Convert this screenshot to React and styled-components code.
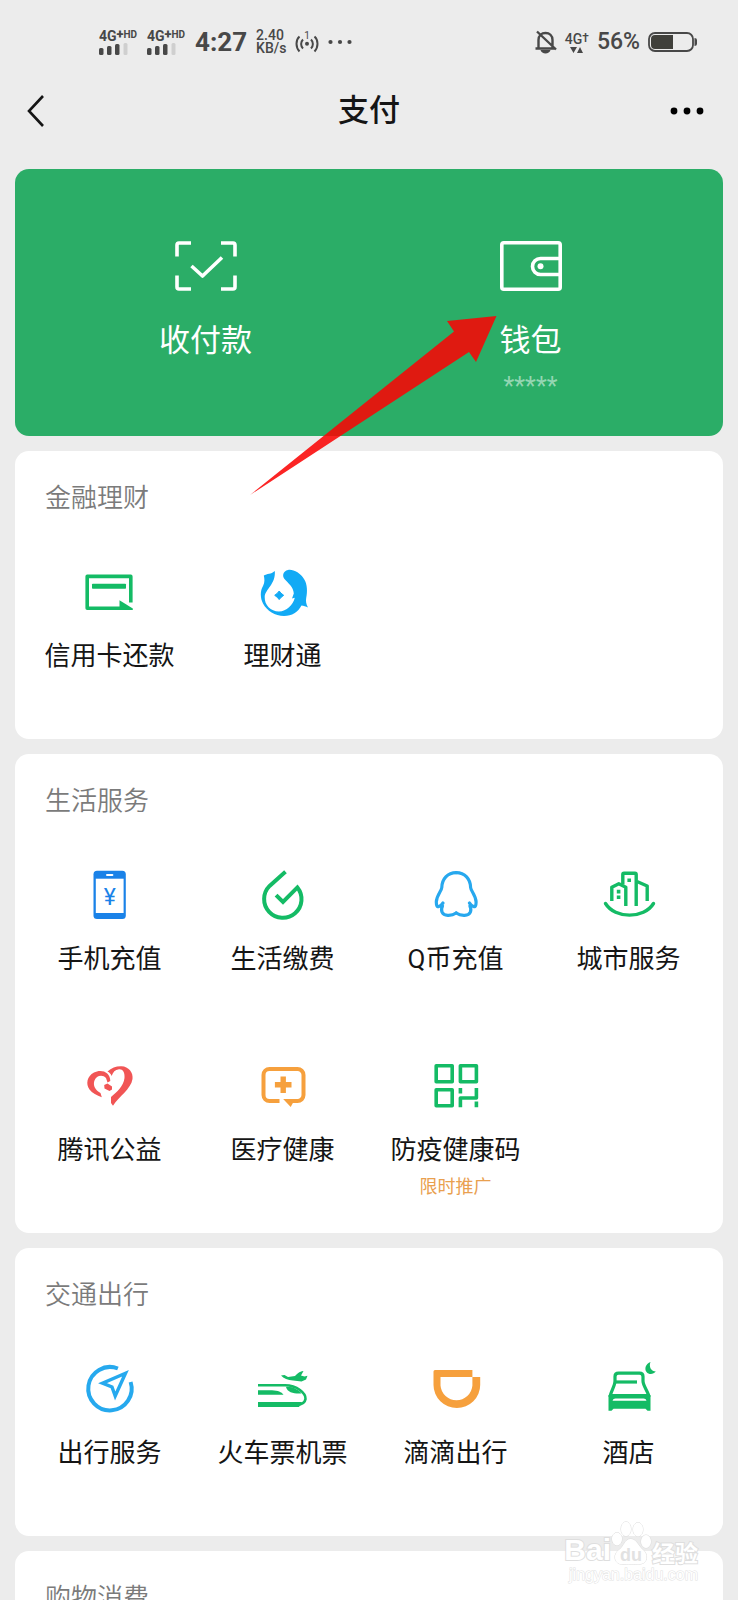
import React from "react";
import styled, { createGlobalStyle } from "styled-components";

const GREEN = "#14bb65";
const BLUE = "#12aaf5";
const ORANGE = "#f6a03d";
const RED = "#f15555";

const CardIcon = () => (
  <Icon viewBox="0 0 56 56">
    <path d="M48.8 38.5V12.4H5.2v31.9H40" fill="none" stroke={GREEN} strokeWidth="3.6" strokeLinejoin="round" />
    <rect x="10" y="19.7" width="34" height="5" rx="0.8" fill={GREEN} />
    <path d="M37.5 36.3L50.8 44.5V46H37.5z" fill={GREEN} />
  </Icon>
);

const FishIcon = () => (
  <Icon viewBox="0 0 56 56">
    <path
      d="M19.8 7C16 10.5 12 9.5 8.8 11.5C9.5 15 10 18 8 22C5 27 5.2 34 8 39.5C12 47 20 52 29 52C37 52 43 48 46.5 41.5C48.5 41.5 51 42.5 53 43.5C51 40 50.7 37 51.2 34C52.5 28 52.5 20 49 15C45.5 9 38 5 33 6C28 7 27 12 29.5 15C33 19 38.5 23 38.8 29.5L37 34.5L39.8 33.8C38 41 31.5 47.5 24 47.5C15.5 47.5 9.5 41 9.7 33C10.2 25 21 20 19.8 7z"
      fill={BLUE}
    />
    <path d="M24.2 27l1.8 2.2 2.7 2.1-2.7 2.1-1.8 2.2-1.8-2.2-2.7-2.1 2.7-2.1z" fill={BLUE} stroke={BLUE} />
  </Icon>
);

const PhoneIcon = () => (
  <Icon viewBox="0 0 56 56">
    <rect x="11.5" y="3.7" width="32.3" height="48.3" rx="3.5" fill="#1a82e8" />
    <rect x="13.8" y="11.7" width="27.8" height="34.3" fill="#fff" />
    <rect x="24" y="7" width="7.4" height="2" rx="1" fill="#fff" />
    <text x="27.8" y="38" textAnchor="middle" fontFamily="Roboto, sans-serif" fontSize="23" fill="#1a82e8">
      ¥
    </text>
  </Icon>
);

const DropIcon = () => (
  <Icon viewBox="0 0 56 56">
    <path
      d="M29 6L14.6 18.9A18.7 18.7 0 1 0 42.4 20.4L28 35L22.5 29.5"
      fill="none"
      stroke={GREEN}
      strokeWidth="4"
      strokeLinecap="square"
    />
  </Icon>
);

const PenguinIcon = () => (
  <Icon viewBox="0 0 56 56">
    <g fill="none" stroke="#27a8ee" strokeWidth="3.2" strokeLinecap="round" strokeLinejoin="round">
      <path d="M28.2 5.7C19.5 5.7 14 12 13.8 20.5C13.6 24 8.6 28 8.3 35C8.3 38.500 9.3 40.5 10.8 39.5C12.5 39 14 37.5 15 36M14.500 39C12.5 43 13.500 48 19.8 48.3C24 48.5 26 47.5 28.2 46" />
      <path d="M28.2 5.7C36.9 5.7 42.4 12 42.6 20.5C42.8 24 47.8 28 48.1 35C48.1 38.5 47.1 40.5 45.6 39.5C43.9 39 42.4 37.5 41.4 36M41.9 39C43.9 43 42.9 48 36.6 48.3C32.4 48.5 30.4 47.5 28.2 46" />
    </g>
  </Icon>
);

const CityIcon = () => (
  <Icon viewBox="0 0 56 56">
    <g fill="none" stroke={GREEN} strokeWidth="3.4" strokeLinejoin="round">
      <path d="M4.5 36.5C14 52 43 52 52.5 36.5" strokeLinecap="round" />
      <path d="M10.8 34V20.3L17.8 16.8L24.8 20.3V39" />
      <path d="M21.8 17.5V7.5Q21.8 6.3 23 6.3H34Q35.2 6.3 35.2 7.5V39" />
      <path d="M36 14.5L46.2 19V34" />
    </g>
    <path d="M15.8 22.8h3.6v3.6h-3.6zM15.8 28.4h3.6V32h-3.6zM26.4 11.4H30V15h-3.6z" fill={GREEN} />
  </Icon>
);

const HeartIcon = () => (
  <Icon viewBox="0 0 56 56">
    <path
      d="M28.3 23C28.5 13.5 18.5 10.8 12 14.6C5 18.5 3.5 26 7.5 31.5C10 35 15 37.5 19.8 39.3L18.5 35C13 32 11 27.5 12.3 23C14 17.5 20.5 16 24 20L25.5 24.500z"
      fill={RED}
    />
    <path
      d="M25.5 13.5C29.5 9.5 34.5 8 39.5 8.2C46.5 8.5 51.5 14.5 50.5 21C49 31 37 38.5 31 47.7L29 45V39C35 34 41.5 28 42.5 20C43 14 40.500 10.8 37 11.2C33 11.8 31 14 29.6 18C29 16 27.5 14.5 25.5 13.5z"
      fill={RED}
    />
    <path d="M22.2 27L25.500 25.500L30 28.500V31.500L27.500 33L22.500 30.500z" fill={RED} />
  </Icon>
);

const MedicalIcon = () => (
  <Icon viewBox="0 0 56 56">
    <path
      d="M24.5 43h-10a6 6 0 0 1-6-6V17a6 6 0 0 1 6-6h28a6 6 0 0 1 6 6v20a6 6 0 0 1-6 6H35"
      fill="none"
      stroke={ORANGE}
      strokeWidth="4"
    />
    <path d="M28.2 41H40L35.7 49z" fill={ORANGE} />
    <path d="M28.2 18.4V35M19.9 26.7h16.6" stroke={ORANGE} strokeWidth="5.4" />
  </Icon>
);

const CodeIcon = () => (
  <Icon viewBox="0 0 56 56">
    <g fill="none" stroke={GREEN} strokeWidth="3.6" strokeLinejoin="round">
      <rect x="8.2" y="7.7" width="16" height="16" />
      <rect x="32.4" y="7.7" width="16" height="16" />
      <rect x="8.2" y="31.7" width="16" height="16" />
      <path d="M32.4 49.3V40H48.4V30M32.4 30V35.5M48.4 43.5V49.3" />
    </g>
  </Icon>
);

const CompassIcon = () => (
  <Icon viewBox="0 0 56 56">
    <g fill="none" stroke="#26a9ee" strokeWidth="4">
      <path d="M35.9 7.5A21.7 21.7 0 1 0 48.6 21" />
      <path d="M43.5 12.2L20.5 22.2L30 26L33.2 35z" strokeWidth="3.4" />
    </g>
  </Icon>
);

const TrainIcon = () => (
  <Icon viewBox="0 0 56 56">
    <path d="M3 24.3H30C42 24.5 51 32 50.5 38C50 42 46 43.7 41 43.7" fill="none" stroke={GREEN} strokeWidth="2.6" />
    <path d="M3 41H47L44 46H3zM3 29.3H17C23 29.5 26.5 31 28.5 33.7H3z" fill={GREEN} />
    <path d="M31 26C37 25 44 29 46.5 32.5C40 33 32.5 32 31 26z" fill={GREEN} />
    <path
      d="M26 14.5L29.5 14L33 16L40 15C42 13 44 10.5 48.5 10L46 14.5L49.5 15.5L52.5 14.8L51 18.5L46.5 20.5L38 19.5C33 19 28.5 17.5 26 14.5z"
      fill={GREEN}
    />
  </Icon>
);

const DidiIcon = () => (
  <Icon viewBox="0 0 56 56">
    <path
      fillRule="evenodd"
      d="M7 9H44.4V16H52.2V24A23.3 23 0 0 1 5.5 24V10.5Q5.5 9 7 9zM12.5 16V24.5A16 16 0 0 0 44.4 24.5V16z"
      fill={ORANGE}
    />
  </Icon>
);

const HotelIcon = () => (
  <Icon viewBox="0 0 56 56">
    <g fill="none" stroke={GREEN} strokeWidth="3.2">
      <path d="M9 36C9.5 31 14 25 14 20V15.5Q14 12.2 17.5 12.2H38.5Q42 12.2 42 15.5V20C42 25 47.5 31 48 36" />
      <path d="M15 21H36" />
      <path d="M11 34.5H46" />
    </g>
    <path
      fillRule="evenodd"
      d="M7.5 34H49.5V49.8H46.5L44.5 47.8H12.5L10.5 49.8H7.5zM11.5 39.8H45.5Q45 37.4 42.5 37.4H14.5Q12 37.4 11.5 39.8z"
      fill={GREEN}
    />
    <path d="M49.5 1C45 2.500 43 7.500 45.500 11C48 14 52.500 13.500 54.800 10.500C50.500 10.500 47.500 6 49.500 1z" fill={GREEN} />
  </Icon>
);

const sections = [
  {
    title: "金融理财",
    items: [
      { name: "信用卡还款", icon: CardIcon },
      { name: "理财通", icon: FishIcon },
    ],
  },
  {
    title: "生活服务",
    items: [
      { name: "手机充值", icon: PhoneIcon },
      { name: "生活缴费", icon: DropIcon },
      { name: "Q币充值", icon: PenguinIcon },
      { name: "城市服务", icon: CityIcon },
      { name: "腾讯公益", icon: HeartIcon },
      { name: "医疗健康", icon: MedicalIcon },
      { name: "防疫健康码", icon: CodeIcon, note: "限时推广" },
    ],
  },
  {
    title: "交通出行",
    items: [
      { name: "出行服务", icon: CompassIcon },
      { name: "火车票机票", icon: TrainIcon },
      { name: "滴滴出行", icon: DidiIcon },
      { name: "酒店", icon: HotelIcon },
    ],
  },
  { title: "购物消费", items: [] },
];

const Signal = () => (
  <SignalBox>
    <Network>
      4G<b>+</b>
      <small>HD</small>
    </Network>
    <svg width="30" height="12" viewBox="0 0 30 12">
      <g fill="#484848">
        <rect x="0" y="5" width="4.5" height="7" rx="1.5" />
        <rect x="8" y="3" width="4.5" height="9" rx="1.5" />
        <rect x="16" y="1" width="4.5" height="11" rx="1.5" />
      </g>
      <rect x="24.5" y="0" width="4" height="12" rx="1.5" fill="#cfcfcf" />
    </svg>
  </SignalBox>
);

const Status = () => (
  <StatusBar>
    <StatusGroup>
      <Signal />
      <Signal />
      <Clock>4:27</Clock>
      <Speed>
        <span>2.40</span>
        <span>KB/s</span>
      </Speed>
      <svg width="24" height="22" viewBox="0 0 24 22">
        <g fill="none" stroke="#484848" strokeWidth="2">
          <path d="M4.5 5.5C0.5 9 0.5 16 4.5 20.5M19.5 5.5C23.5 9 23.5 16 19.5 20.5" />
          <path d="M8 8.5C5.5 11 5.5 15 8 17.5M16 8.5C18.5 11 18.5 15 16 17.5" />
        </g>
        <text x="12" y="8" textAnchor="middle" fontFamily="Roboto, sans-serif" fontSize="10" fill="#484848">
          1
        </text>
        <circle cx="12" cy="12.8" r="2" fill="#484848" />
      </svg>
      <svg width="24" height="6" viewBox="0 0 24 6" fill="#484848">
        <circle cx="2.5" cy="3" r="2.1" />
        <circle cx="12" cy="3" r="2.1" />
        <circle cx="21.5" cy="3" r="2.1" />
      </svg>
    </StatusGroup>
    <StatusGroup $tight>
      <svg width="22" height="24" viewBox="0 0 22 24">
        <g fill="none" stroke="#484848" strokeWidth="2.4">
          <path d="M3.5 18V10C3.5 5.5 6.5 3 10.5 3C14.5 3 17.5 5.5 17.5 10V18M0.5 18.5H20.5M2 1.5L21 19.5" />
        </g>
        <path d="M5.5 20H15.5C14.5 24.5 6.5 24.5 5.5 20z" fill="#484848" />
      </svg>
      <DataBox>
        <span>
          4G<sup>†</sup>
        </span>
        <svg width="14" height="6" viewBox="0 0 14 6" fill="#484848">
          <path d="M0 0H7L3.5 6zM7 6H13L10 0z" />
        </svg>
      </DataBox>
      <Percent>56%</Percent>
      <svg width="50" height="20" viewBox="0 0 50 20">
        <rect x="1" y="1" width="44" height="18" rx="6" fill="none" stroke="#484848" strokeWidth="1.8" />
        <path d="M25 3H7Q3 3 3 7V13Q3 17 7 17H25z" fill="#40403b" />
        <path d="M46.5 6Q49 6 49 8V12Q49 14 46.5 14z" fill="#484848" />
      </svg>
    </StatusGroup>
  </StatusBar>
);

const Watermark = () => (
  <Mark>
    <MarkRow>
      <MarkLatin>Bai</MarkLatin>
      <svg width="41" height="45" viewBox="0 0 41 45">
        <g fill="#fff" stroke="#dcdcdc" strokeWidth="1">
          <ellipse cx="6" cy="18" rx="5" ry="6.5" />
          <ellipse cx="15" cy="8" rx="5" ry="7.2" />
          <ellipse cx="27" cy="8.5" rx="5" ry="7" />
          <ellipse cx="35" cy="20.5" rx="5" ry="6.5" />
          <path d="M19.5 18C25 18 27 24 31 28C35 31 36.5 35 35 39C33 44.5 26 43 20 43C14 43 7 45 4.5 39C3 34.5 5 31 9 28C13 25 14 18 19.5 18z" />
        </g>
        <text x="20" y="40" textAnchor="middle" fontFamily="Liberation Sans, sans-serif" fontWeight="700" fontSize="18" fill="#e2e2e2" stroke="none">
          du
        </text>
      </svg>
      <MarkHan>经验</MarkHan>
    </MarkRow>
    <MarkUrl>jingyan.baidu.com</MarkUrl>
  </Mark>
);

const App = () => {
  return (
    <Screen>
      <GlobalStyle />
      <Status />
      <NavBar>
        <NavButton aria-label="返回">
          <svg width="18" height="34" viewBox="0 0 18 34" fill="none" stroke="#151515" strokeWidth="2.6">
            <path d="M16 2L2 17L16 32" />
          </svg>
        </NavButton>
        <Title>支付</Title>
        <NavButton aria-label="更多">
          <svg width="34" height="8" viewBox="0 0 34 8" fill="#000">
            <circle cx="4" cy="4" r="3.4" />
            <circle cx="17" cy="4" r="3.4" />
            <circle cx="30" cy="4" r="3.4" />
          </svg>
        </NavButton>
      </NavBar>
      <Main>
        <Wallet>
          <WalletItem>
            <svg width="62" height="50" viewBox="0 0 62 50" fill="none" stroke="#fff" strokeWidth="3.6">
              <path d="M16 2H4Q2 2 2 4V15.5M46 2H58Q60 2 60 4V15.5M16 48H4Q2 48 2 46V34.5M46 48H58Q60 48 60 46V34.5" />
              <path d="M16.500 25L27.5 35L47 16.5" strokeLinejoin="round" strokeWidth="3.6" />
            </svg>
            <WalletName>收付款</WalletName>
          </WalletItem>
          <WalletItem>
            <svg width="62" height="50" viewBox="0 0 62 50" fill="none" stroke="#fff" strokeWidth="3.6">
              <rect x="1.8" y="1.8" width="58.4" height="46.4" rx="2" />
              <path d="M60 17.5H40.5A8 8 0 0 0 40.5 33.500H60" />
              <circle cx="40.5" cy="25.2" r="3" fill="#fff" stroke="none" />
            </svg>
            <WalletName>钱包</WalletName>
            <Balance>*****</Balance>
            <Pointer width="248" height="182" viewBox="0 0 248 182">
              <path d="M0 179L204 15.5L197 5L246.5 0L226 46L219 36z" fill="#fa0505" fillOpacity="0.87" />
            </Pointer>
          </WalletItem>
        </Wallet>
        {sections.map((section) => (
          <Card key={section.title}>
            <CardTitle>{section.title}</CardTitle>
            <Grid>
              {section.items.map(({ name, icon: ItemIcon, note }) => (
                <Item key={name}>
                  <ItemIcon />
                  <Label>{name}</Label>
                  {note && <Note>{note}</Note>}
                </Item>
              ))}
            </Grid>
          </Card>
        ))}
      </Main>
      <Watermark />
    </Screen>
  );
};

export default App;

const GlobalStyle = createGlobalStyle`
  * {
    box-sizing: border-box;
  }
  body {
    margin: 0;
    background: #ececec;
    font-family: Roboto, "Noto Sans CJK SC", sans-serif;
  }
  button {
    font: inherit;
    color: inherit;
    background: none;
    border: 0;
    padding: 0;
    cursor: pointer;
  }
  svg {
    display: block;
    flex-shrink: 0;
  }
`;

const Screen = styled.div`
  position: relative;
  display: flex;
  flex-direction: column;
  height: 100vh;
  overflow: hidden;
`;

const StatusBar = styled.div`
  display: flex;
  justify-content: space-between;
  align-items: center;
  height: 84px;
  padding: 0 40px 0 99px;
  color: #484848;
  flex-shrink: 0;
`;
const StatusGroup = styled.div`
  display: flex;
  align-items: center;
  gap: ${(props) => (props.$tight ? 8 : 9)}px;
`;
const SignalBox = styled.div`
  display: flex;
  flex-direction: column;
  width: 39px;
`;
const Network = styled.div`
  display: flex;
  font-size: 14px;
  font-weight: 700;
  line-height: 14px;
  b {
    font-size: 13px;
    line-height: 10px;
  }
  small {
    font-size: 10px;
    line-height: 11px;
  }
`;
const Clock = styled.div`
  font-size: 26px;
  font-weight: 700;
  line-height: 32px;
`;
const Speed = styled.div`
  display: flex;
  flex-direction: column;
  font-size: 14px;
  font-weight: 500;
  line-height: 13px;
`;
const DataBox = styled.div`
  display: flex;
  flex-direction: column;
  align-items: center;
  font-size: 14px;
  font-weight: 500;
  line-height: 16px;
  sup {
    font-size: 12px;
    line-height: 12px;
    vertical-align: 2px;
  }
`;
const Percent = styled.div`
  font-size: 23px;
  font-weight: 500;
  line-height: 28px;
`;

const NavBar = styled.header`
  display: flex;
  justify-content: space-between;
  align-items: center;
  height: 54px;
  padding: 0 34px 0 27px;
  flex-shrink: 0;
`;
const NavButton = styled.button`
  display: flex;
  align-items: center;
  min-width: 34px;
  height: 44px;

  &:first-child {
    width: 41px;
  }
`;
const Title = styled.h1`
  margin: 0;
  font-size: 31px;
  font-weight: 500;
  line-height: 44px;
  color: #151515;
`;

const Main = styled.main`
  flex: 1;
  display: flex;
  flex-direction: column;
  gap: 15px;
  padding: 31px 15px 0;
  overflow-y: auto;
  scrollbar-width: none;
`;

const Wallet = styled.section`
  position: relative;
  z-index: 1;
  display: grid;
  grid-template-columns: 1fr 1fr;
  height: 267px;
  padding: 0 30px 0 28px;
  border-radius: 14px;
  background: #2bad67;
  flex-shrink: 0;
`;
const WalletItem = styled.button`
  position: relative;
  display: flex;
  flex-direction: column;
  align-items: center;
  padding-top: 72px;
  color: #fff;
`;
const WalletName = styled.span`
  margin-top: 28px;
  font-size: 31px;
  line-height: 44px;
`;
const Balance = styled.span`
  margin-top: 8px;
  font-size: 25px;
  line-height: 32px;
  color: #94d6b2;
`;
const Pointer = styled.svg`
  position: absolute;
  top: 147px;
  right: 195px;
  pointer-events: none;
`;

const Card = styled.section`
  border-radius: 14px;
  background: #fff;
  flex-shrink: 0;
`;
const CardTitle = styled.h2`
  margin: 0;
  padding: 29px 30px 32px;
  font-size: 26px;
  font-weight: 350;
  line-height: 36px;
  color: #7b7b7b;
`;
const Grid = styled.div`
  display: grid;
  grid-template-columns: repeat(4, 1fr);
  padding: 0 8px;
`;
const Item = styled.button`
  display: flex;
  flex-direction: column;
  align-items: center;
  height: 191px;
  padding-top: 16px;
  color: #151515;
`;
const Icon = styled.svg`
  width: 56px;
  height: 56px;
`;
const Label = styled.span`
  margin-top: 18px;
  font-size: 26px;
  line-height: 36px;
  white-space: nowrap;
`;
const Note = styled.span`
  margin-top: 6px;
  font-size: 18px;
  line-height: 26px;
  color: #e9a04f;
`;

const Mark = styled.div`
  position: absolute;
  right: 40px;
  bottom: 16px;
  display: flex;
  flex-direction: column;
  align-items: flex-end;
  color: #fff;
  pointer-events: none;
  -webkit-text-stroke: 2px #dedede;
  paint-order: stroke fill;
`;
const MarkRow = styled.div`
  display: flex;
  align-items: flex-end;
`;
const MarkLatin = styled.span`
  font-family: "Liberation Sans", sans-serif;
  font-size: 30px;
  font-weight: 700;
  line-height: 32px;
`;
const MarkHan = styled.span`
  font-family: "Noto Sans CJK SC", sans-serif;
  font-size: 23px;
  font-weight: 700;
  line-height: 28px;
`;
const MarkUrl = styled.span`
  font-family: "Liberation Sans", sans-serif;
  font-size: 16px;
  line-height: 18px;
  -webkit-text-stroke: 1px #e2e2e2;
`;
